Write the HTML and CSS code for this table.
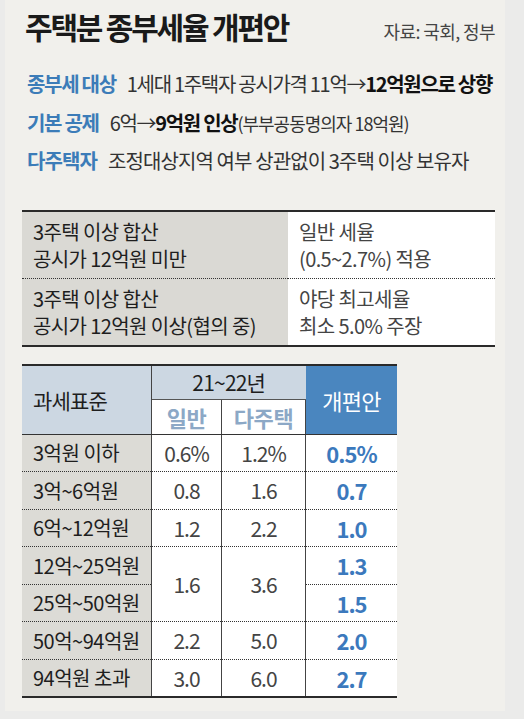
FILE: index.html
```html
<!DOCTYPE html>
<html>
<head>
  <meta charset="utf-8">
  <title>주택분 종부세율 개편안</title>
  <link rel="stylesheet" href="styles.css">
</head>
<body>
  <div class="panel">
    <div class="head">
      <h1 class="title">주택분 종부세율 개편안</h1>
      <span class="source">자료: 국회, 정부</span>
    </div>

    <ul class="summary">
      <li><span class="label">종부세 대상</span>1세대 1주택자 공시가격 11억→<b>12억원으로 상향</b></li>
      <li><span class="label">기본 공제</span>6억→<b>9억원 인상</b><small>(부부공동명의자 18억원)</small></li>
      <li class="loose"><span class="label">다주택자</span>조정대상지역 여부 상관없이 3주택 이상 보유자</li>
    </ul>

    <table class="multi">
      <tr>
        <th>3주택 이상 합산<br>공시가 12억원 미만</th>
        <td>일반 세율<br>(0.5~2.7%) 적용</td>
      </tr>
      <tr>
        <th>3주택 이상 합산<br>공시가 12억원 이상(협의 중)</th>
        <td>야당 최고세율<br>최소 5.0% 주장</td>
      </tr>
    </table>

    <table class="rates">
      <thead>
        <tr>
          <th class="base" rowspan="2">과세표준</th>
          <th class="years" colspan="2">21~22년</th>
          <th class="reform" rowspan="2">개편안</th>
        </tr>
        <tr>
          <th class="sub">일반</th>
          <th class="sub">다주택</th>
        </tr>
      </thead>
      <tbody>
        <tr><th>3억원 이하</th><td>0.6%</td><td>1.2%</td><td class="new">0.5%</td></tr>
        <tr><th>3억~6억원</th><td>0.8</td><td>1.6</td><td class="new">0.7</td></tr>
        <tr><th>6억~12억원</th><td>1.2</td><td>2.2</td><td class="new">1.0</td></tr>
        <tr><th>12억~25억원</th><td rowspan="2">1.6</td><td rowspan="2">3.6</td><td class="new">1.3</td></tr>
        <tr><th>25억~50억원</th><td class="new">1.5</td></tr>
        <tr><th>50억~94억원</th><td>2.2</td><td>5.0</td><td class="new">2.0</td></tr>
        <tr><th>94억원 초과</th><td>3.0</td><td>6.0</td><td class="new">2.7</td></tr>
      </tbody>
    </table>
  </div>
</body>
</html>
```

FILE: styles.css
```css
body {
  margin: 0;
  background-color: #ebebea;
  font-family: "Noto Sans CJK KR", "Noto Sans", sans-serif;
  color: #222;
}

.panel {
  width: 473px;
  height: 711px;
  margin-left: 5px;
  padding: 0 10px 0 17px;
  background-color: #f1f0ec;
  overflow: hidden;
}

.head {
  display: flex;
  justify-content: space-between;
  align-items: baseline;
  padding: 4px 0 0 3px;
  height: 48px;
}

.title {
  margin: 0;
  font-size: 30px;
  font-weight: 700;
  letter-spacing: -2.2px;
  color: #1a1a1a;
}

.source {
  font-size: 18px;
  color: #444;
  letter-spacing: -0.6px;
}

.summary {
  list-style: none;
  margin: 17px 0 0;
  padding: 0 0 0 5px;
}

.summary li {
  height: 38.5px;
  font-size: 20px;
  letter-spacing: -1.3px;
  color: #333;
  white-space: nowrap;
}

.summary li.loose {
  letter-spacing: -0.9px;
}

.summary .label {
  color: #3c7cb8;
  font-weight: 700;
  margin-right: 11px;
}

.summary b {
  color: #111;
}

.summary small {
  font-size: 18px;
  letter-spacing: -1px;
}

.multi {
  width: 473px;
  margin-top: 25px;
  border-collapse: collapse;
  border-top: 2px solid #2a2a2a;
  border-bottom: 2px solid #2a2a2a;
  font-size: 20px;
  letter-spacing: -0.6px;
}

.multi th,
.multi td {
  height: 66px;
  padding: 0 0 0 11px;
  text-align: left;
  font-weight: 400;
  line-height: 27px;
}

.multi th {
  width: 255px;
  background-color: #dad9d4;
  color: #1e1e1e;
}

.multi td {
  background-color: #fff;
  color: #444;
}

.multi tr + tr th,
.multi tr + tr td {
  border-top: 1px dotted #333;
}

.rates {
  width: 375px;
  margin-top: 17px;
  border-collapse: collapse;
  border-top: 2px solid #2a2a2a;
  border-bottom: 2px solid #2a2a2a;
  font-size: 21px;
  letter-spacing: -0.8px;
  text-align: center;
}

.rates th,
.rates td {
  padding: 0;
  font-weight: 400;
}

.rates thead th {
  background-color: #ccd7e2;
  border-bottom: 1.5px solid #333;
}

.rates .base {
  width: 118px;
  padding-left: 11px;
  text-align: left;
  border-right: 1.5px solid #444;
  color: #1e1e1e;
}

.rates .years {
  height: 33px;
  border-bottom: 1.5px solid #555;
  color: #1e1e1e;
}

.rates .reform {
  width: 91px;
  background-color: #4a86bf;
  color: #fff;
  font-size: 22px;
}

.rates .sub {
  height: 34px;
  background-color: #fff;
  color: #8ca8c6;
  font-weight: 700;
  font-size: 22px;
  letter-spacing: -0.4px;
}

.rates .sub:first-child {
  width: 69px;
  border-right: 1.5px solid #444;
}

.rates .sub + .sub {
  border-right: 1.5px solid #444;
}

.rates tbody th {
  height: 36.5px;
  padding-left: 11px;
  text-align: left;
  background-color: #dcdbd6;
  color: #1e1e1e;
  font-size: 20px;
  letter-spacing: -0.5px;
  border-right: 1.5px solid #444;
  border-bottom: 1px dotted #333;
  white-space: nowrap;
}

.rates tbody td {
  background-color: #fff;
  color: #444;
  letter-spacing: -1px;
  border-right: 1.5px solid #444;
  border-bottom: 1px dotted #333;
}

.rates tbody td.new {
  border-right: 0;
  color: #3b79bd;
  font-weight: 700;
  font-size: 22px;
}
```
